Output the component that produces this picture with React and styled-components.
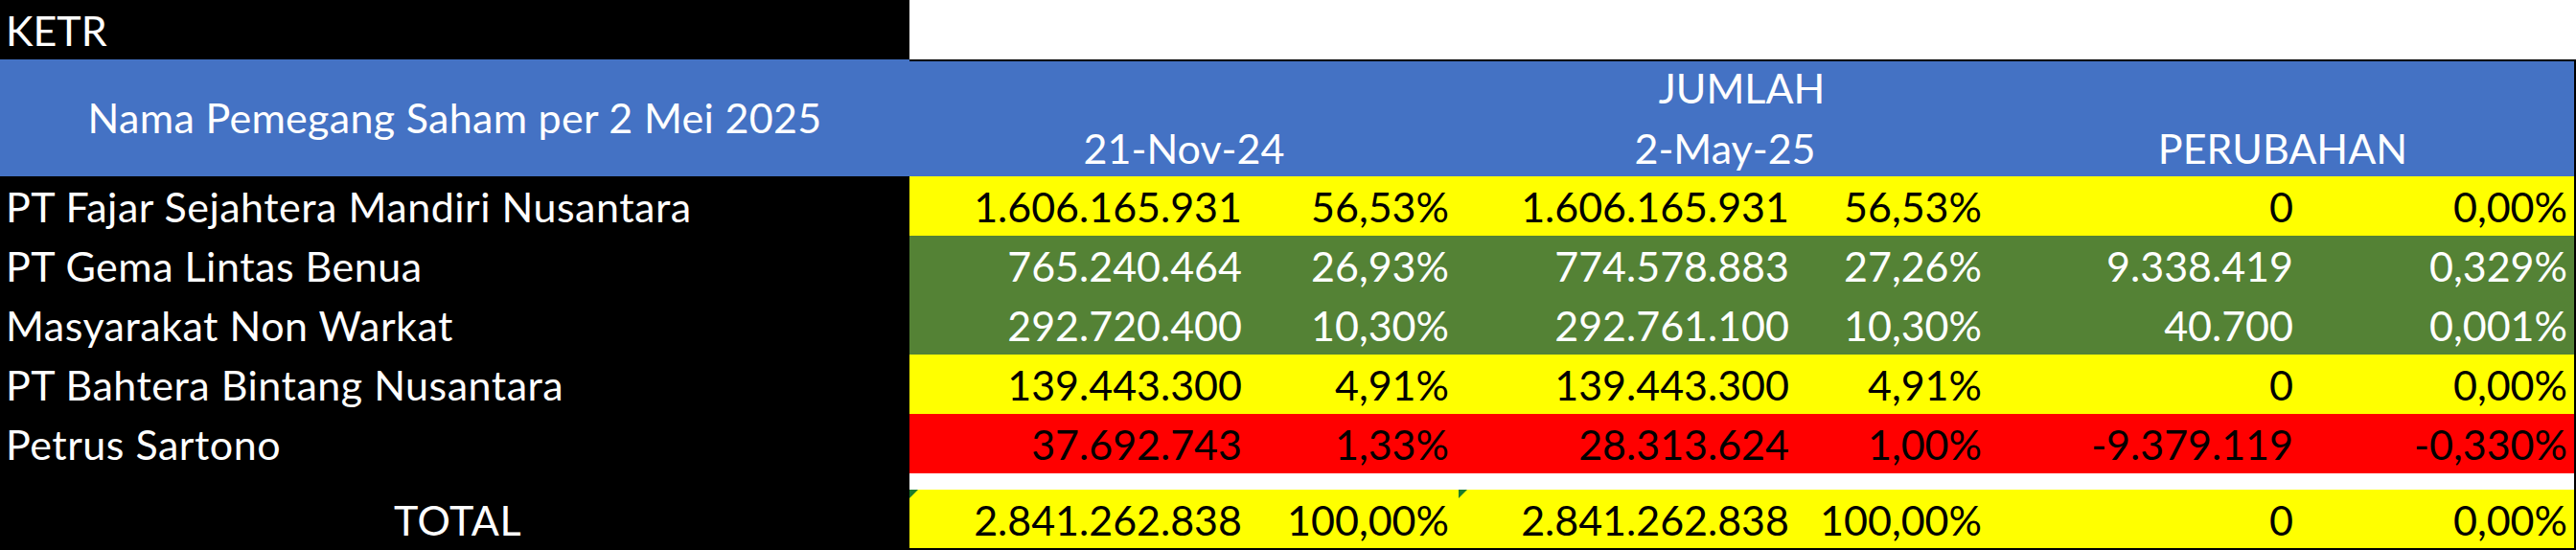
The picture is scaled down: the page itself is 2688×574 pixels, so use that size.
import React from 'react'
import styled, { createGlobalStyle } from 'styled-components';

const GlobalStyle = createGlobalStyle`
html, body {
  margin: 0;
  padding: 0;
  background: #fff;
}
body {
  font-family: Lato, "Open Sans", "Liberation Sans", sans-serif;
}
`

const tones = {
    yellow: { bg: '#ffff00', fg: '#000' },
    green: { bg: '#548235', fg: '#fff' },
    red: { bg: '#ff0000', fg: '#000' },
    blank: { bg: '#fff', fg: '#000' },
}

export const Page = styled.div`
width: 2688px;
height: 574px;
overflow: hidden;
background: #fff;
`;

export const TitleRow = styled.div`
display: grid;
grid-template-columns: 949px 1fr;
height: 62px;
`;

export const TitleCell = styled.div`
background: #000;
color: #fff;
font-size: 43px;
line-height: 58px;
padding: 3px 0 0 6px;
box-sizing: border-box;
`;

export const Sheet = styled.div`
display: grid;
grid-template-columns: 949px 357px 216px 355px 201px 325px 283px;
grid-template-rows: 61px 61px repeat(5, 62px) 17px 61px;
border-right: 2px solid #000;
border-bottom: 2px solid #000;
width: 2688px;
box-sizing: border-box;
font-size: 43px;
`;

export const HeadName = styled.div`
grid-row: 1 / span 2;
grid-column: 1;
background: #4472c4;
color: #fff;
display: flex;
align-items: center;
justify-content: center;
padding-bottom: 2px;
letter-spacing: 0.3px;
`;

export const HeadGroup = styled.div`
grid-column: ${p => p.$span};
background: #4472c4;
color: #fff;
text-align: center;
box-sizing: border-box;
border-top: ${p => (p.$top ? '2px solid #000' : 'none')};
line-height: ${p => (p.$top ? '55px' : '58px')};
padding-top: ${p => (p.$top ? '0' : '3px')};
white-space: nowrap;
`;

export const NameCell = styled.div`
background: #000;
color: #fff;
box-sizing: border-box;
line-height: 58px;
padding: 3px 0 0 6px;
text-align: ${p => (p.$center ? 'center' : 'left')};
letter-spacing: 0.5px;
white-space: nowrap;
`;

export const Cell = styled.div`
position: relative;
background: ${p => tones[p.$tone].bg};
color: ${p => tones[p.$tone].fg};
box-sizing: border-box;
line-height: 58px;
padding: 3px ${p => (p.$last ? '7px' : '10px')} 0 0;
text-align: right;
white-space: nowrap;
`;

export const Gap = styled.div`
grid-column: ${p => p.$span};
background: ${p => (p.$dark ? '#000' : '#fff')};
`;

export const Marker = styled.span`
position: absolute;
top: 0;
left: 0;
width: 0;
height: 0;
border-top: 9px solid #1c7c2c;
border-right: 9px solid transparent;
`;

const rows = [
    { name: 'PT Fajar Sejahtera Mandiri Nusantara', tone: 'yellow', v: ['1.606.165.931', '56,53%', '1.606.165.931', '56,53%', '0', '0,00%'] },
    { name: 'PT Gema Lintas Benua', tone: 'green', v: ['765.240.464', '26,93%', '774.578.883', '27,26%', '9.338.419', '0,329%'] },
    { name: 'Masyarakat Non Warkat', tone: 'green', v: ['292.720.400', '10,30%', '292.761.100', '10,30%', '40.700', '0,001%'] },
    { name: 'PT Bahtera Bintang Nusantara', tone: 'yellow', v: ['139.443.300', '4,91%', '139.443.300', '4,91%', '0', '0,00%'] },
    { name: 'Petrus Sartono', tone: 'red', v: ['37.692.743', '1,33%', '28.313.624', '1,00%', '-9.379.119', '-0,330%'] },
]

const total = ['2.841.262.838', '100,00%', '2.841.262.838', '100,00%', '0', '0,00%']

const App = () => {
    return (
        <>
        <GlobalStyle />
        <Page>
            <TitleRow>
                <TitleCell>KETR</TitleCell>
                <div />
            </TitleRow>
            <Sheet>
                <HeadName>Nama Pemegang Saham per 2 Mei 2025</HeadName>
                <HeadGroup $span="2 / -1" $top>JUMLAH</HeadGroup>
                <HeadGroup $span="2 / span 2">21-Nov-24</HeadGroup>
                <HeadGroup $span="4 / span 2">2-May-25</HeadGroup>
                <HeadGroup $span="6 / span 2">PERUBAHAN</HeadGroup>

                {rows.map(r => (
                    <React.Fragment key={r.name}>
                        <NameCell>{r.name}</NameCell>
                        {r.v.map((val, i) => (
                            <Cell key={i} $tone={r.tone} $last={i === 5}>{val}</Cell>
                        ))}
                    </React.Fragment>
                ))}

                <Gap $span="1" $dark />
                <Gap $span="2 / -1" />

                <NameCell $center>TOTAL</NameCell>
                {total.map((val, i) => (
                    <Cell key={i} $tone="yellow" $last={i === 5}>
                        {(i === 0 || i === 2) && <Marker />}
                        {val}
                    </Cell>
                ))}
            </Sheet>
        </Page>
        </>
    )
}

export default App
